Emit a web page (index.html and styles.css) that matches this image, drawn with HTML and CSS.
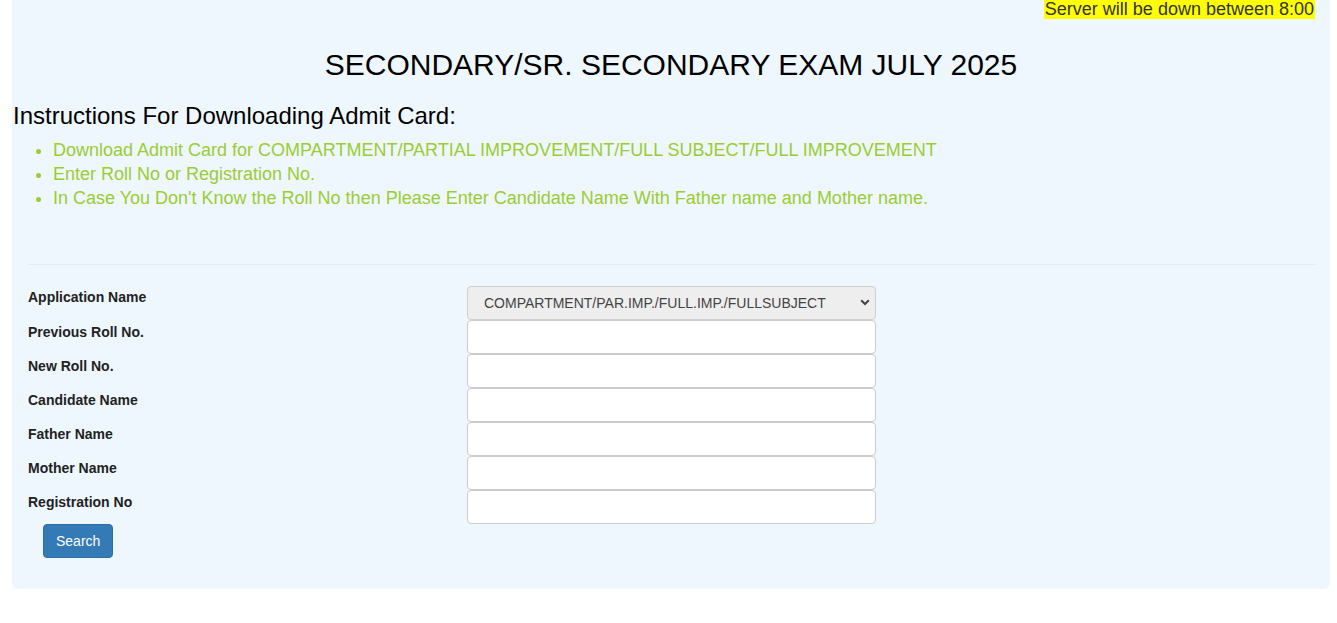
FILE: index.html
```html
<!DOCTYPE HTML>
<html lang="en">
<head>
<meta charset="UTF-8">
<title>Admit Card</title>
<link rel="stylesheet" href="styles.css">
</head>
<body>
<div class="panel">
    <div class="notice"><span>Server will be down between 8:00</span></div>

    <h2 class="title">SECONDARY/SR. SECONDARY EXAM JULY 2025</h2>

    <h3 class="instr">Instructions For Downloading Admit Card:</h3>
    <ul class="steps">
        <li>Download Admit Card for COMPARTMENT/PARTIAL IMPROVEMENT/FULL SUBJECT/FULL IMPROVEMENT</li>
        <li>Enter Roll No or Registration No.</li>
        <li>In Case You Don't Know the Roll No then Please Enter Candidate Name With Father name and Mother name.</li>
    </ul>

    <div class="formArea">
        <hr>
        <form class="searchForm" onsubmit="return false;">
            <label>Application Name</label>
            <div class="selectWrap">
                <select class="field">
                    <option>COMPARTMENT/PAR.IMP./FULL.IMP./FULLSUBJECT</option>
                </select>
                <svg class="chevron" width="10" height="7" viewBox="0 0 10 7"><path d="M1.2 1.3 L5 5 L8.8 1.3" fill="none" stroke="#444" stroke-width="2"/></svg>
            </div>

            <label>Previous Roll No.</label>
            <input class="field" type="text">

            <label>New Roll No.</label>
            <input class="field" type="text">

            <label>Candidate Name</label>
            <input class="field" type="text">

            <label>Father Name</label>
            <input class="field" type="text">

            <label>Mother Name</label>
            <input class="field" type="text">

            <label>Registration No</label>
            <input class="field" type="text">

            <div class="btnRow"><button class="btnSearch" type="submit">Search</button></div>
        </form>
    </div>
</div>
</body>
</html>
```

FILE: styles.css
```css
body {
    margin: 0;
    background-color: #ffffff;
    font-family: "Liberation Sans", Arial, sans-serif;
    font-size: 14px;
    color: #333333;
}

.panel {
    margin: 0 7px 0 12px;
    padding-bottom: 31px;
    background-color: #eff7fe;
    border-radius: 0 0 6px 6px;
}

/* top notice strip */
.notice {
    height: 19px;
    padding-right: 15px;
    text-align: right;
    overflow: hidden;
}

.notice span {
    display: inline-block;
    height: 19px;
    line-height: 19px;
    font-size: 18px;
    padding: 0 1px;
    background-color: #ffff00;
    color: #333333;
    vertical-align: top;
}

.title {
    margin: 28px 0 0 0;
    font-size: 30px;
    line-height: 36px;
    font-weight: normal;
    text-align: center;
    color: #000000;
}

.instr {
    margin: 19px 0 0 0;
    padding-left: 1px;
    font-size: 24px;
    line-height: 28px;
    font-weight: normal;
    color: #000000;
}

.steps {
    margin: 8px 0 0 0;
    padding-left: 41px;
    font-size: 18px;
    line-height: 24px;
    color: #9acd32;
}

.formArea {
    padding: 0 15px 0 16px;
}

.formArea hr {
    margin: 54px 0 21px 0;
    border: 0;
    border-top: 1px solid #e8ebee;
}

.searchForm {
    display: grid;
    grid-template-columns: 439px 409px;
    grid-auto-rows: 34px;
}

.searchForm label {
    margin-top: 2px;
    font-weight: bold;
    line-height: 20px;
    color: #222222;
}

.searchForm label:first-child {
    margin-top: 1px;
}

.field {
    box-sizing: border-box;
    width: 100%;
    height: 34px;
    margin: 0;
    border: 1px solid #cccccc;
    border-radius: 4px;
    background-color: #ffffff;
    font-family: "Liberation Sans", Arial, sans-serif;
    font-size: 14px;
    color: #555555;
    padding: 6px 12px;
}

.selectWrap {
    position: relative;
}

.selectWrap select {
    appearance: none;
    -webkit-appearance: none;
    padding: 0 30px 0 16px;
    background-color: #eeeeee;
    color: #444444;
    border-color: #cfcfcf;
}

.chevron {
    position: absolute;
    right: 6px;
    top: 13px;
    pointer-events: none;
}

.btnRow {
    grid-column: 1 / 3;
    padding-left: 15px;
}

.btnSearch {
    height: 34px;
    padding: 6px 12px;
    border: 1px solid #2e6da4;
    border-radius: 4px;
    background-color: #337ab7;
    color: #ffffff;
    font-family: "Liberation Sans", Arial, sans-serif;
    font-size: 14px;
    line-height: 20px;
    cursor: pointer;
}
```
